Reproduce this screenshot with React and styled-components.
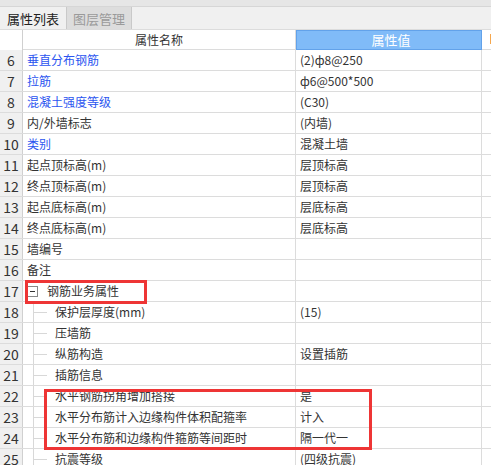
import React from 'react';
import styled, { createGlobalStyle } from 'styled-components';

const Global = createGlobalStyle`
  html, body { margin: 0; padding: 0; background: #fff; }
  body { font-family: "Noto Sans CJK SC", "Noto Sans", sans-serif; overflow: hidden; }
`;

const Page = styled.div`
  width: 491px;
  height: 465px;
  overflow: hidden;
  background: #fff;
`;

const TopStrip = styled.div`
  height: 6px;
  background: #e6e6e6;
  border-bottom: 1px solid #d6d6d6;
`;

const TabBar = styled.div`
  height: 22px;
  display: flex;
  background: #f0f0f0;
  border-bottom: 1px solid #dcdcdc;
`;

const Tab = styled.div`
  width: ${p => (p.$active ? '66px' : '64px')};
  display: flex;
  align-items: center;
  justify-content: center;
  font-size: 13px;
  color: ${p => (p.$active ? '#222' : '#9a9a9a')};
  background: ${p => (p.$active ? '#f0f0f0' : '#dddddd')};
  border-left: ${p => (p.$active ? 'none' : '1px solid #c9c9c9')};
  border-right: ${p => (p.$active ? 'none' : '1px solid #c9c9c9')};
`;

const Table = styled.div`
  position: relative;
`;

const Row = styled.div`
  display: grid;
  grid-template-columns: 23px 273px 186px 1fr;
  height: ${p => (p.$head ? '20px' : '21px')};
  box-sizing: border-box;
  border-bottom: 1px solid #dcdcdc;
  font-size: 12px;
  line-height: 20px;
`;

const Num = styled.div`
  background: ${p => (p.$head ? '#fff' : '#f0f0f0')};
  border-right: 1px solid #d0d0d0;
  font-size: 14px;
  color: #333;
  text-align: center;
`;

const Name = styled.div`
  position: relative;
  border-right: 1px solid #dcdcdc;
  color: ${p => (p.$blue ? '#2b55f0' : '#333')};
  padding-left: ${p => (p.$child ? '32px' : '4px')};
  white-space: nowrap;
  overflow: hidden;
  ${p => p.$head && 'text-align: center; padding-left: 0; color: #333;'}
`;

const Value = styled.div`
  border-right: 1px solid #dcdcdc;
  padding-left: 4px;
  color: #333;
  white-space: nowrap;
  ${p => p.$head && `
    background: #80bbf8;
    border: 1px solid #62a2ea;
    color: #fff;
    text-align: center;
    font-size: 13px;
    line-height: 18px;
  `}
`;

const Tail = styled.div`
  position: relative;
`;

const OrangeMark = styled.div`
  position: absolute;
  left: 8px;
  top: 4px;
  width: 2px;
  height: 10px;
  background: #f5a74e;
`;

const TreeLine = styled.span`
  position: absolute;
  left: 10px;
  top: 0;
  bottom: -1px;
  width: 1px;
  background: #d8d8d8;
  &::after {
    content: '';
    position: absolute;
    left: 0;
    top: 10px;
    width: 14px;
    height: 1px;
    background: #d8d8d8;
  }
`;

const Toggle = styled.span`
  display: inline-block;
  width: 9px;
  height: 9px;
  border: 1px solid #888;
  margin: 0 9px 0 0;
  vertical-align: -1px;
  position: relative;
  &::after {
    content: '';
    position: absolute;
    left: 2px;
    top: 4px;
    width: 5px;
    height: 1px;
    background: #333;
  }
`;

const RedBox = styled.div`
  position: absolute;
  border: 3px solid #ee3535;
  box-sizing: border-box;
  pointer-events: none;
`;

const rows = [
  [6, '垂直分布钢筋', '(2)ф8@250', 1],
  [7, '拉筋', 'ф6@500*500', 1],
  [8, '混凝土强度等级', '(C30)', 1],
  [9, '内/外墙标志', '(内墙)'],
  [10, '类别', '混凝土墙', 1],
  [11, '起点顶标高(m)', '层顶标高'],
  [12, '终点顶标高(m)', '层顶标高'],
  [13, '起点底标高(m)', '层底标高'],
  [14, '终点底标高(m)', '层底标高'],
  [15, '墙编号', ''],
  [16, '备注', ''],
];

const children = [
  [18, '保护层厚度(mm)', '(15)'],
  [19, '压墙筋', ''],
  [20, '纵筋构造', '设置插筋'],
  [21, '插筋信息', ''],
  [22, '水平钢筋拐角增加搭接', '是'],
  [23, '水平分布筋计入边缘构件体积配箍率', '计入'],
  [24, '水平分布筋和边缘构件箍筋等间距时', '隔一代一'],
  [25, '抗震等级', '(四级抗震)'],
];

export default function App() {
  return (
    <Page>
      <Global />
      <TopStrip />
      <TabBar>
        <Tab $active>属性列表</Tab>
        <Tab>图层管理</Tab>
      </TabBar>
      <Table>
        <Row $head>
          <Num $head />
          <Name $head>属性名称</Name>
          <Value $head>属性值</Value>
          <Tail><OrangeMark /></Tail>
        </Row>
        {rows.map(([n, name, val, blue]) => (
          <Row key={n}>
            <Num>{n}</Num>
            <Name $blue={blue}>{name}</Name>
            <Value>{val}</Value>
            <Tail />
          </Row>
        ))}
        <Row>
          <Num>17</Num>
          <Name><Toggle />钢筋业务属性</Name>
          <Value />
          <Tail />
        </Row>
        {children.map(([n, name, val]) => (
          <Row key={n}>
            <Num>{n}</Num>
            <Name $child><TreeLine />{name}</Name>
            <Value>{val}</Value>
            <Tail />
          </Row>
        ))}
        <RedBox style={{ left: 25, top: 250, width: 122, height: 24 }} />
        <RedBox style={{ left: 44, top: 359, width: 328, height: 61 }} />
      </Table>
    </Page>
  );
}
